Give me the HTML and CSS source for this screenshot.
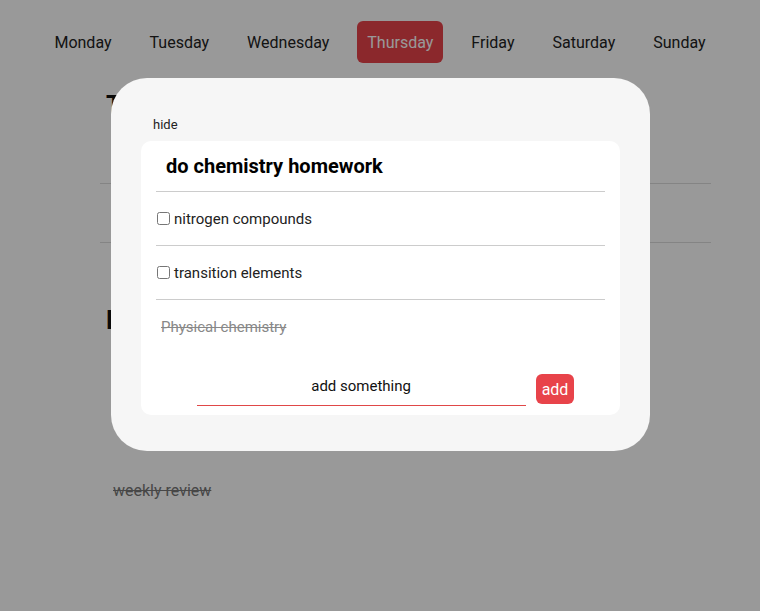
FILE: index.html
```html
<!DOCTYPE html>
<html>
<head>
<meta charset="utf-8">
<link rel="stylesheet" href="styles.css">
</head>
<body>
<nav class="days">
  <span class="day">Monday</span>
  <span class="day">Tuesday</span>
  <span class="day">Wednesday</span>
  <span class="day active">Thursday</span>
  <span class="day">Friday</span>
  <span class="day">Saturday</span>
  <span class="day">Sunday</span>
</nav>
<main class="page">
  <h2 class="section-title">Todo</h2>
  <div class="task-row"></div>
  <div class="task-row"></div>
  <h2 class="section-title second">Done</h2>
  <div class="done-item">weekly review</div>
</main>
<div class="overlay">
  <div class="modal">
    <div class="hide">hide</div>
    <div class="card">
      <div class="card-title">do chemistry homework</div>
      <label class="sub-row"><input type="checkbox" class="check"> nitrogen compounds</label>
      <label class="sub-row"><input type="checkbox" class="check"> transition elements</label>
      <div class="sub-done">Physical chemistry</div>
      <div class="add-row">
        <input class="add-input" type="text" placeholder="add something">
        <button class="add-btn">add</button>
      </div>
    </div>
  </div>
</div>
</body>
</html>
```
FILE: styles.css
```css
* { box-sizing: border-box; }
html, body { margin: 0; padding: 0; }
body {
  background: #fff;
  font-family: Roboto, "Liberation Sans", sans-serif;
  color: #111;
  width: 760px;
  height: 611px;
  overflow: hidden;
}
.days {
  display: flex;
  justify-content: center;
  gap: 18px;
  padding-top: 21px;
}
.day {
  font-size: 16px;
  line-height: 18px;
  padding: 13px 10px 11px;
  border-radius: 6px;
  color: #222;
}
.day.active {
  background: #e8434a;
  color: #fff;
}
.page {
  margin-left: 100px;
  width: 611px;
}
.section-title {
  font-size: 26px;
  font-weight: 700;
  margin: 27px 0 0 6px;
  line-height: 30px;
}
.task-row {
  height: 59px;
  border-bottom: 1px solid #ddd;
}
.task-row:first-of-type { margin-top: 5px; }
.section-title.second { margin-top: 62px; }
.done-item {
  margin-top: 146px;
  margin-left: 13px;
  font-size: 16px;
  color: #777;
  text-decoration: line-through;
}
.overlay {
  position: fixed;
  inset: 0;
  background: rgba(0,0,0,0.4);
}
.modal {
  position: absolute;
  left: 111px;
  top: 78px;
  width: 539px;
  height: 373px;
  background: #f6f6f6;
  border-radius: 36px;
  padding: 39px 30px 36px;
}
.hide {
  font-size: 13px;
  line-height: 16px;
  color: #222;
  margin-left: 12px;
  margin-bottom: 8px;
}
.card {
  background: #fff;
  border-radius: 10px;
  padding: 0 15px;
  height: 274px;
}
.card-title {
  height: 51px;
  border-bottom: 1px solid #ccc;
  font-size: 20px;
  font-weight: 700;
  line-height: 51px;
  padding-left: 10px;
  color: #000;
}
.sub-row {
  display: flex;
  align-items: center;
  height: 54px;
  border-bottom: 1px solid #ccc;
  font-size: 15px;
  color: #222;
  gap: 4px;
}
.check {
  margin: 0 0 0 1px;
  width: 13px;
  height: 13px;
}
.sub-done {
  height: 55px;
  line-height: 55px;
  padding-left: 5px;
  font-size: 15px;
  color: #888;
  text-decoration: line-through;
}
.add-row {
  display: flex;
  justify-content: center;
  align-items: flex-end;
  gap: 10px;
  padding-left: 10px;
  margin-top: 18px;
}
.add-input {
  width: 329px;
  height: 33px;
  border: none;
  border-bottom: 1px solid #e04848;
  outline: none;
  text-align: center;
  font-family: inherit;
  font-size: 15px;
  background: transparent;
  padding: 0 0 6px;
}
.add-input::placeholder { color: #111; }
.add-btn {
  background: #e8434a;
  color: #fff;
  border: none;
  border-radius: 6px;
  font-family: inherit;
  font-size: 16px;
  height: 30px;
  padding: 0 6px;
  margin-bottom: 2px;
}
```
